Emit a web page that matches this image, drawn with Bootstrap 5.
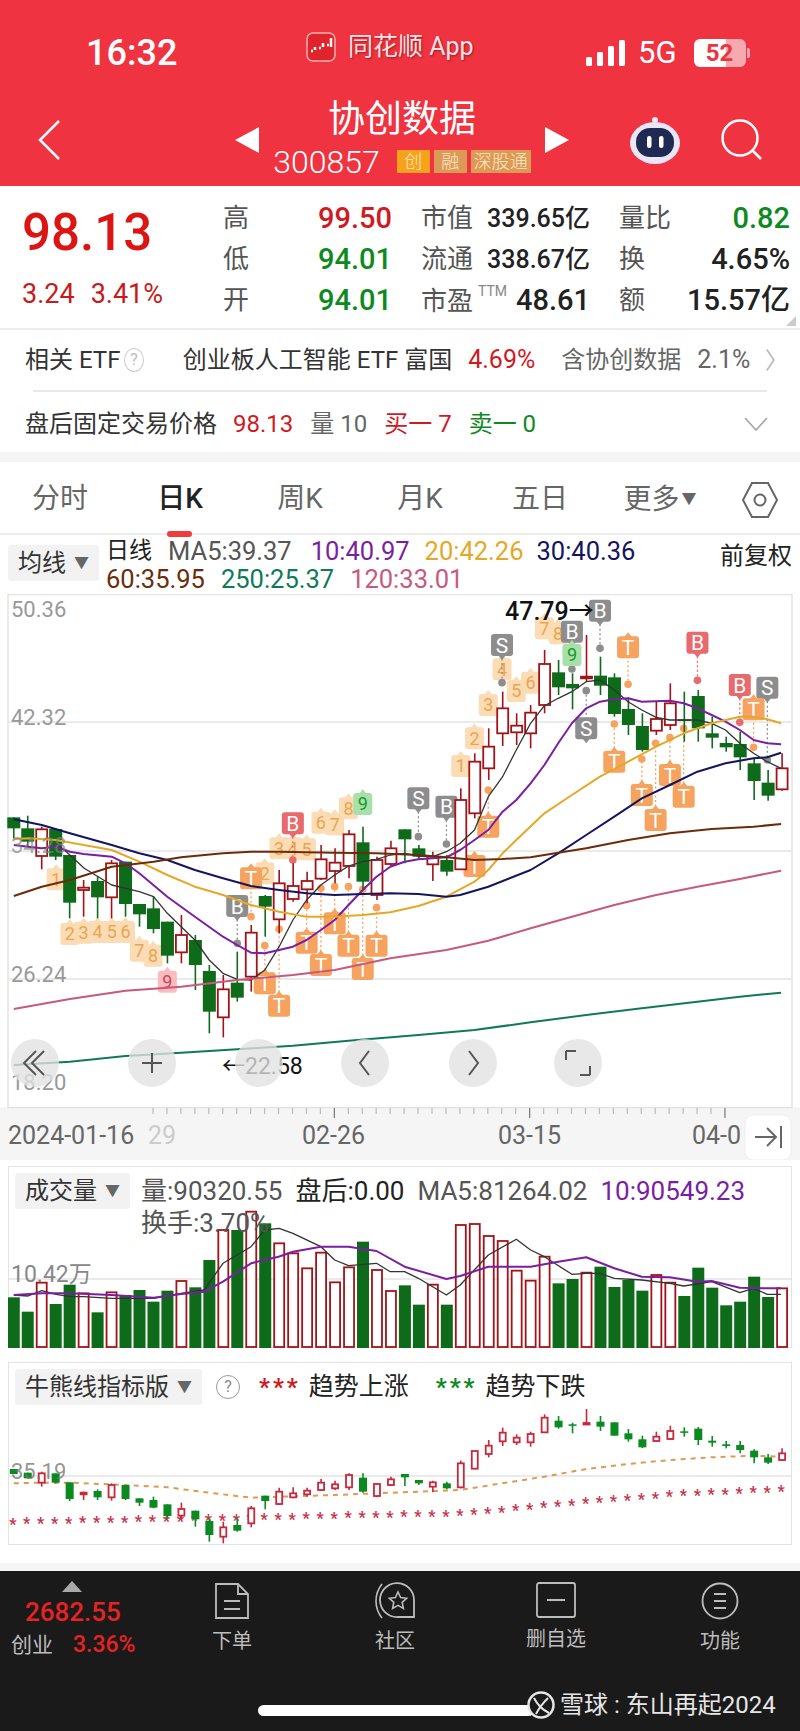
<!DOCTYPE html>
<html lang="zh">
<head>
<meta charset="UTF-8">
<meta name="viewport" content="width=device-width, initial-scale=1.0">
<title>协创数据</title>
<link href="https://cdn.jsdelivr.net/npm/bootstrap@5.3.0/dist/css/bootstrap.min.css" rel="stylesheet">
<style>
    body { width: 800px; background: #fff; font-family: Roboto, "Noto Sans CJK SC", sans-serif; color: #222; overflow-x: hidden; }
    svg { display: block; }
    svg text { font-family: Roboto, "Noto Sans CJK SC", sans-serif; }

    .top-red { height: 186px; background: #ef3340; color: #fff; }
    .status-row { height: 100px; padding-left: 86px; padding-top: 6px; }
    .clock { width: 220px; font-size: 36px; font-weight: 500; }
    .app-name { width: 280px; font-size: 25px; color: #fbe3e5; text-shadow: 1px 1px 2px rgba(90, 0, 0, .5); margin-top: -12px; }
    .app-icon { margin-right: 12px; }
    .net-name { font-size: 31px; margin: 0 14px 0 12px; }
    .batt { position: relative; width: 52px; height: 28px; border-radius: 6px; background: linear-gradient(90deg, #fff 62%, #f6a9ae 62%); color: #ef3340; font-size: 24px; font-weight: 700; line-height: 28px; margin-left: 3px; }
    .batt::after { content: ""; position: absolute; right: -4px; top: 9px; width: 3px; height: 10px; border-radius: 0 2px 2px 0; background: #f6a9ae; }
    .nav-row { height: 80px; }
    .back-slot { width: 235px; padding-left: 37px; }
    .mid-slot { width: 286px; }
    .robot-icon { margin-left: 60px; }
    .search-icon { margin-left: 40px; }
    .stock-title { font-size: 37px; line-height: 38px; }
    .stock-code { font-size: 32px; font-weight: 300; line-height: 36px; margin-top: 5px; }
    .mini-tag { height: 23px; line-height: 23px; font-size: 18px; padding: 0 3px; min-width: 33px; background: #dd9a56; color: #fde9c8; margin-left: 4px; }
    .mini-tag.hot { background: #f7a21c; margin-left: 17px; }

    .quote-panel { height: 144px; border-bottom: 2px solid #ececec; }
    .quote-panel::after { content: ""; position: absolute; right: 4px; bottom: 2px; border: 5px solid transparent; border-right-color: #ccc; border-bottom-color: #ccc; }
    .price-col { width: 223px; padding-left: 22px; }
    .price-big { font-size: 51px; font-weight: 500; color: #dc1414; line-height: 62px; margin-top: 16px; }
    .price-sub { font-size: 27px; color: #c81a1a; margin-top: 14px; line-height: 32px; }
    .quote-grid { display: grid; grid-template-columns: 169px 169px 171px; column-gap: 29px; grid-auto-rows: 41px; padding-top: 12px; }
    .q-key { font-size: 26px; color: #555; white-space: nowrap; }
    .q-val { font-size: 29px; font-weight: 500; white-space: nowrap; }
    .q-val.narrow { font-size: 25px; }
    .q-small { font-size: 14px; color: #888; vertical-align: 14px; margin-left: 5px; }
    .c-up { color: #d11a1f; }
    .c-down { color: #0d8a1e; }
    .c-ink { color: #222; }

    .info-rows { height: 122px; font-size: 24px; white-space: nowrap; color: #333; }
    .info-row { height: 60px; padding: 0 25px; }
    .info-row.lower { padding-top: 4px; }
    .info-rule { height: 2px; background: #e9e9e9; margin: 0 33px; }
    .info-grey { color: #666; }
    .etf-name { margin-left: 39px; }
    .etf-pct { font-size: 25px; }
    .etf-holds { margin-left: 26px; }
    .after-gap { margin-left: 17px; }
    .after-chevron { margin-right: 7px; }
    .help-dot { width: 22px; height: 24px; border: 1.5px solid #ccc; border-radius: 50%; color: #bbb; font-size: 16px; line-height: 21px; text-align: center; }
    .gray-band { height: 10px; background: #f5f5f5; }

    .tab-strip { display: grid; grid-template-columns: repeat(6, 120px) 80px; height: 73px; border-bottom: 2px solid #ececec; }
    .tab-strip .nav-link { padding: 0; font-size: 28px; color: #666; text-align: center; line-height: 74px; position: relative; }
    .tab-strip .nav-link.active { color: #222; font-weight: 500; }
    .tab-strip .nav-link.active::after { content: ""; position: absolute; left: 47px; bottom: 0; width: 25px; height: 6px; border-radius: 3px; background: #ee3b3b; }
    .caret-mark { font-size: 15px; color: #666; vertical-align: 5px; margin-left: 2px; }

    .ma-legend { height: 59px; padding: 2px 8px 0; font-size: 25.5px; line-height: 28px; white-space: nowrap; }
    .pick-box { background: #f2f2f2; border-radius: 3px; height: 36px; font-size: 24px; line-height: 36px; color: #333; padding: 0 10px; }
    .pick-box .caret-mark { color: #666; margin-left: 8px; vertical-align: 3px; }
    .ma-rows { margin-left: 7px; }
    .day-name { font-size: 23px; color: #222; margin-right: 16px; }
    .ma-row-one .m10 { margin: 0 15px 0 19px; }
    .ma-row-one .m20 { margin-right: 13px; }
    .fq-name { font-size: 24px; color: #222; margin-top: 5px; }
    .m5 { color: #555; } .m10 { color: #7a1fa2; } .m20 { color: #e5a826; } .m30 { color: #15155f; }
    .m60 { color: #6b2c0a; } .m250 { color: #0f7a5a; } .m120 { color: #c9597c; }

    .sub-chart { margin: 6px 8px 0; height: 182px; }
    .sub-chart.last-one { margin-top: 14px; height: 183px; }
    .sub-legend { position: absolute; left: 7px; top: 7px; font-size: 24px; line-height: 34px; white-space: nowrap; color: #555; }
    .sub-texts { margin-left: 11px; font-size: 26px; line-height: 32px; padding-top: 2px; }
    .vol-line { gap: 13px; }
    .plain-ink { color: #222; }
    .bull-help { margin-left: 14px; width: 24px; border-color: #999; color: #888; }
    .trend-stars { font-weight: 700; letter-spacing: 3px; }
    .trend-stars.first { margin-left: 19px; }
    .trend-stars.second { margin-left: 27px; }
    .trend-name { font-size: 25px; color: #222; margin-left: 8px; }
    .foot-gap { height: 26px; background: linear-gradient(#fff 18px, #f5f5f5 18px); }

    .dock { height: 160px; background: #1a1a1a; color: #bdbdbd; padding-top: 10px; }
    .dock-index { width: 150px; padding-left: 11px; }
    .dock-up { width: 0; height: 0; border: 10px solid transparent; border-top: 0; border-bottom: 11px solid #aaa; margin: 0 0 0 51px; }
    .dock-num { font-size: 26px; font-weight: 500; color: #e62323; line-height: 32px; margin: 4px 0 0 14px; }
    .dock-sub { font-size: 21px; line-height: 30px; margin-top: 2px; }
    .dock-sub b { font-size: 23px; font-weight: 500; color: #e62323; margin-left: 20px; }
    .dock-item { position: absolute; top: 11px; width: 80px; text-align: center; font-size: 20px; line-height: 26px; }
    .dock-item svg { margin: 0 auto 8px; }
    .dock-a { left: 192px; } .dock-b { left: 355px; } .dock-c { left: 516px; } .dock-d { left: 680px; }
    .home-pill { position: absolute; left: 258px; top: 134px; width: 276px; height: 11px; border-radius: 6px; background: #fff; }
    .water-mark { position: absolute; left: 527px; top: 116px; color: #e6e6e6; font-size: 24px; white-space: nowrap; }
    .water-logo { margin-right: 5px; }
</style>
</head>
<body>
<header class="top-red">
    <div class="status-row d-flex align-items-center">
        <div class="clock">16:32</div>
        <div class="app-name d-flex align-items-center">
            <svg class="app-icon" width="30" height="30" viewBox="0 0 30 30"><rect x="1" y="1" width="28" height="28" rx="6" fill="#e0242c" stroke="#f4b0b0" stroke-width="1.5"/><path d="M5 19h2M9 18v-3M13 16h2M17 15v-4M21 13h2M25 6v9" stroke="#fff" stroke-width="2.5"/></svg>
            <span>同花顺 App</span>
        </div>
        <svg width="40" height="26" viewBox="0 0 40 26"><rect x="0" y="17" width="6" height="9" rx="1.5" fill="#fff"/><rect x="11" y="12" width="6" height="14" rx="1.5" fill="#fff"/><rect x="22" y="6" width="6" height="20" rx="1.5" fill="#fff"/><rect x="33" y="0" width="6" height="26" rx="1.5" fill="#fff"/></svg>
        <div class="net-name">5G</div>
        <div class="batt text-center">52</div>
    </div>
    <div class="nav-row d-flex align-items-center">
        <div class="back-slot"><svg width="24" height="42" viewBox="0 0 24 42"><path d="M22 2 3 21l19 19" fill="none" stroke="#fff" stroke-width="2.5"/></svg></div>
        <svg width="24" height="26" viewBox="0 0 24 26"><path d="M24 0v26L0 13z" fill="#fff"/></svg>
        <div class="mid-slot text-center">
            <div class="stock-title">协创数据</div>
            <div class="stock-code d-flex justify-content-center align-items-center">300857<span class="mini-tag hot">创</span><span class="mini-tag">融</span><span class="mini-tag">深股通</span></div>
        </div>
        <svg width="24" height="26" viewBox="0 0 24 26"><path d="M0 0v26l24-13z" fill="#fff"/></svg>
        <svg class="robot-icon" width="52" height="50" viewBox="0 0 52 50"><circle cx="26" cy="5" r="3" fill="#f3e6f3"/><ellipse cx="26" cy="28" rx="25" ry="21" fill="#e9e6f7"/><rect x="7" y="13" width="38" height="29" rx="14" fill="#1f2a52"/><rect x="18" y="21" width="4.5" height="12" rx="2.2" fill="#fff"/><rect x="30" y="21" width="4.5" height="12" rx="2.2" fill="#fff"/></svg>
        <svg class="search-icon" width="42" height="42" viewBox="0 0 42 42"><circle cx="19" cy="19" r="17.5" fill="none" stroke="#fff" stroke-width="2.5"/><path d="m32 32 8 8" stroke="#fff" stroke-width="2.5"/></svg>
    </div>
</header>

<section class="quote-panel d-flex position-relative">
    <div class="price-col">
        <div class="price-big">98.13</div>
        <div class="price-sub d-flex gap-3"><span>3.24</span><span>3.41%</span></div>
    </div>
    <div class="quote-grid">
        <div class="d-flex justify-content-between align-items-center"><span class="q-key">高</span><span class="q-val c-up">99.50</span></div>
        <div class="d-flex justify-content-between align-items-center"><span class="q-key">市值</span><span class="q-val narrow c-ink">339.65亿</span></div>
        <div class="d-flex justify-content-between align-items-center"><span class="q-key">量比</span><span class="q-val c-down">0.82</span></div>
        <div class="d-flex justify-content-between align-items-center"><span class="q-key">低</span><span class="q-val c-down">94.01</span></div>
        <div class="d-flex justify-content-between align-items-center"><span class="q-key">流通</span><span class="q-val narrow c-ink">338.67亿</span></div>
        <div class="d-flex justify-content-between align-items-center"><span class="q-key">换</span><span class="q-val c-ink">4.65%</span></div>
        <div class="d-flex justify-content-between align-items-center"><span class="q-key">开</span><span class="q-val c-down">94.01</span></div>
        <div class="d-flex justify-content-between align-items-center"><span class="q-key">市盈<span class="q-small">TTM</span></span><span class="q-val c-ink">48.61</span></div>
        <div class="d-flex justify-content-between align-items-center"><span class="q-key">额</span><span class="q-val c-ink">15.57亿</span></div>
    </div>
</section>

<section class="info-rows">
    <div class="info-row d-flex align-items-center">
        <span>相关 ETF</span><span class="help-dot ms-1">?</span>
        <span class="etf-name">创业板人工智能 ETF 富国</span>
        <span class="c-up etf-pct ms-3">4.69%</span>
        <span class="info-grey etf-holds">含协创数据</span>
        <span class="info-grey etf-pct ms-3">2.1%</span>
        <svg width="10" height="26" viewBox="0 0 10 26" class="ms-3"><path d="m1 1 8 12-8 12" fill="none" stroke="#bbb" stroke-width="2"/></svg>
    </div>
    <div class="info-rule"></div>
    <div class="info-row lower d-flex align-items-center">
        <span>盘后固定交易价格</span>
        <span class="c-up ms-3">98.13</span>
        <span class="info-grey after-gap">量 10</span>
        <span class="c-up after-gap">买一 7</span>
        <span class="c-down after-gap">卖一 0</span>
        <svg width="24" height="14" viewBox="0 0 24 14" class="ms-auto after-chevron"><path d="m1 1 11 12L23 1" fill="none" stroke="#aaa" stroke-width="1.8"/></svg>
    </div>
</section>
<div class="gray-band"></div>

<nav class="nav tab-strip">
    <a class="nav-link" href="#">分时</a>
    <a class="nav-link active" href="#">日K</a>
    <a class="nav-link" href="#">周K</a>
    <a class="nav-link" href="#">月K</a>
    <a class="nav-link" href="#">五日</a>
    <a class="nav-link" href="#">更多<span class="caret-mark">▼</span></a>
    <a class="nav-link d-flex align-items-center justify-content-center" href="#"><svg width="36" height="38" viewBox="0 0 36 38"><path d="M10 2h16l9 17-9 17H10L1 19z" fill="none" stroke="#666" stroke-width="2"/><circle cx="18" cy="19" r="5.5" fill="none" stroke="#666" stroke-width="2"/></svg></a>
</nav>

<section class="ma-legend d-flex align-items-start">
    <div class="pick-box mt-2">均线<span class="caret-mark">▼</span></div>
    <div class="ma-rows">
        <div class="d-flex ma-row-one"><span class="day-name">日线</span><span class="m5">MA5:39.37</span><span class="m10">10:40.97</span><span class="m20">20:42.26</span><span class="m30">30:40.36</span></div>
        <div class="d-flex gap-3"><span class="m60">60:35.95</span><span class="m250">250:25.37</span><span class="m120">120:33.01</span></div>
    </div>
    <div class="fq-name ms-auto">前复权</div>
</section>

<div id="mainChart"></div>

<section class="sub-chart position-relative" id="volChart">
    <div class="sub-legend d-flex align-items-start">
        <div class="pick-box">成交量<span class="caret-mark">▼</span></div>
        <div class="sub-texts">
            <div class="d-flex vol-line"><span>量:90320.55</span><span class="plain-ink">盘后:0.00</span><span>MA5:81264.02</span><span class="m10">10:90549.23</span></div>
            <div>换手:3.70%</div>
        </div>
    </div>
</section>

<section class="sub-chart last-one position-relative" id="bullChart">
    <div class="sub-legend d-flex align-items-center">
        <div class="pick-box">牛熊线指标版<span class="caret-mark">▼</span></div>
        <span class="help-dot bull-help">?</span>
        <span class="c-up trend-stars first">***</span>
        <span class="trend-name">趋势上涨</span>
        <span class="c-down trend-stars second">***</span>
        <span class="trend-name">趋势下跌</span>
    </div>
</section>
<div class="foot-gap"></div>

<footer class="dock position-relative d-flex">
    <div class="dock-index">
        <div class="dock-up"></div>
        <div class="dock-num">2682.55</div>
        <div class="dock-sub">创业<b>3.36%</b></div>
    </div>
    <div class="dock-item dock-a"><svg width="36" height="38" viewBox="0 0 36 38"><path d="M2 2h22l10 10v24H2zM24 2v10h10M10 19h16M10 27h16" fill="none" stroke="#bdbdbd" stroke-width="1.8"/></svg>下单</div>
    <div class="dock-item dock-b"><svg width="42" height="38" viewBox="0 0 42 38"><path d="M8 2C0 12 0 26 8 36" fill="none" stroke="#bdbdbd" stroke-width="1.6"/><path d="M40 35H24a17 17 0 1 1 16-17z" fill="none" stroke="#bdbdbd" stroke-width="1.8"/><path d="m24 10 2.6 5.6 6 .7-4.400 4.100 1.200 6-5.400-3-5.400 3 1.200-6-4.400-4.100 6-.7z" fill="none" stroke="#bdbdbd" stroke-width="1.6"/></svg>社区</div>
    <div class="dock-item dock-c"><svg width="40" height="36" viewBox="0 0 40 36"><rect x="1" y="1" width="38" height="34" rx="2" fill="none" stroke="#bdbdbd" stroke-width="1.8"/><path d="M11 18h18" stroke="#bdbdbd" stroke-width="2"/></svg>删自选</div>
    <div class="dock-item dock-d"><svg width="38" height="38" viewBox="0 0 38 38"><circle cx="19" cy="19" r="17.500" fill="none" stroke="#bdbdbd" stroke-width="1.8"/><path d="M13 12h12M13 19h12M13 26h12" stroke="#bdbdbd" stroke-width="2"/></svg>功能</div>
    <div class="home-pill"></div>
    <div class="water-mark d-flex align-items-center">
        <svg class="water-logo" width="28" height="30" viewBox="0 0 28 30"><circle cx="14" cy="15" r="12.500" fill="#1a1a1a" stroke="#e6e6e6" stroke-width="2.500"/><path d="M7 8c4 8 9 12 15 15M21 8C17 12 12 18 9 24" fill="none" stroke="#e6e6e6" stroke-width="2"/></svg>
        <span>雪球 : 东山再起2024</span>
    </div>
</footer>

<script>
    // zoom crops were 1.96x wide and 3x tall, so data stays in those units
    const X = z => z / 1.96;
    const Y3 = z => 780 + z / 3;
    const Y4 = z => 1150 + z / 3;
    const Y5 = z => 1350 + z / 3;
    const slotX = i => X(27 + 27.38 * i);

    const UP = "#a11318", DOWN = "#0d6b1a";

    // [up?, high, top, bottom, low]
    const mainBars = [
        [0,112,112,145,175],[0,107,145,185,200],[1,140,148,228,268],[0,145,147,230,240],[0,225,225,368,415],
        [1,300,323,330,410],[0,290,303,352,415],[1,240,250,352,415],[0,245,245,372,410],[0,372,372,403,440],
        [0,350,385,447,460],[0,425,425,527,550],[1,405,465,517,550],[0,465,480,555,630],[0,555,573,695,760],
        [1,585,628,712,772],[0,515,608,653,665],[1,435,458,590,635],[0,345,348,380,470],[1,270,310,418,460],
        [1,250,318,357,365],[1,275,303,328,370],[1,195,238,296,300],[1,205,248,273,310],[1,150,163,258,295],
        [0,140,187,305,330],[1,230,240,345,360],[1,182,205,252,258],[0,148,148,178,250],[0,195,205,230,240],
        [1,215,230,253,303],[0,225,240,275,287],[1,25,60,268,270],[1,-80,-55,100,115],[1,-155,-100,-35,0],
        [1,-265,-215,-140,-102],[1,-200,-163,-143,-105],[1,-225,-202,-140,-95],[1,-390,-348,-225,-200],[0,-360,-323,-278,-255],
        [0,-320,-288,-275,-212],[1,-435,-310,-305,-295],[0,-370,-313,-283,-255],[0,-320,-308,-198,-190],[0,-248,-213,-165,-135],
        [0,-200,-162,-90,-85],[1,-235,-183,-148,-135],[1,-290,-230,-165,-150],[0,-265,-182,-177,-115],[0,-270,-252,-155,-115],
        [0,-190,-140,-127,-95],[0,-130,-111,-98,-85],[0,-145,-108,-68,-30],[0,-65,-50,3,60],[0,-30,8,47,62],[1,-80,-35,28,32]
    ];

    const mainLines = [
        ["#333", 1.3, [[110,190],[137,225],[165,265],[219,315],[273,335],[301,350],[328,400],[382,480],[410,540],[437,580],[465,598],[492,600],[519,570],[547,500],[574,420],[601,360],[629,315],[656,285],[683,258],[711,245],[738,238],[765,225],[793,220],[820,228],[848,230],[875,215],[902,190],[930,150],[957,50],[985,-10],[1012,-90],[1040,-170],[1067,-223],[1094,-245],[1121,-265],[1149,-295],[1176,-300],[1204,-270],[1231,-235],[1258,-210],[1286,-188],[1313,-180],[1367,-180],[1395,-170],[1422,-150],[1450,-110],[1477,-80],[1504,-55],[1531,-35]]],
        ["#7a1fa2", 2, [[27,195],[55,200],[82,205],[110,200],[137,215],[164,222],[219,230],[246,250],[273,280],[328,350],[382,410],[437,470],[465,495],[492,518],[519,520],[547,510],[574,500],[601,480],[629,450],[656,420],[683,375],[711,330],[738,290],[765,260],[793,245],[820,238],[848,235],[875,232],[902,210],[930,180],[957,150],[985,95],[1012,60],[1040,10],[1067,-45],[1094,-110],[1121,-170],[1149,-215],[1176,-235],[1204,-242],[1231,-245],[1258,-235],[1313,-238],[1340,-230],[1367,-215],[1395,-195],[1422,-175],[1450,-150],[1477,-120],[1504,-110],[1531,-107]]],
        ["#e5a826", 2, [[27,178],[55,175],[110,180],[164,195],[219,210],[273,245],[328,285],[382,320],[437,345],[492,375],[547,395],[601,410],[656,410],[711,405],[765,397],[820,378],[875,350],[930,305],[957,270],[985,220],[1012,180],[1067,100],[1121,45],[1176,-10],[1231,-55],[1286,-100],[1340,-140],[1395,-170],[1450,-190],[1477,-190],[1504,-182],[1531,-170]]],
        ["#15155f", 2, [[27,118],[82,135],[137,160],[219,195],[273,220],[328,240],[382,270],[437,295],[492,318],[547,330],[601,340],[656,345],[711,342],[765,340],[820,342],[875,350],[902,345],[957,320],[1040,270],[1094,220],[1149,165],[1204,110],[1258,55],[1313,15],[1367,-25],[1422,-50],[1477,-65],[1504,-68],[1531,-82]]],
        ["#6b2c0a", 2, [[27,348],[82,320],[137,300],[219,260],[301,245],[355,232],[437,220],[492,215],[547,215],[656,218],[738,220],[820,225],[875,232],[930,240],[984,237],[1040,232],[1094,218],[1149,205],[1231,180],[1313,160],[1395,147],[1477,140],[1531,132]]],
        ["#c9597c", 2, [[27,687],[137,657],[246,632],[355,620],[465,600],[574,585],[656,570],[765,535],[875,510],[957,482],[1040,445],[1121,410],[1204,375],[1286,345],[1367,320],[1450,297],[1531,272]]],
        ["#0f7a5a", 2, [[27,855],[137,845],[246,828],[355,818],[465,808],[574,797],[683,782],[820,765],[930,750],[1040,727],[1149,705],[1258,685],[1367,665],[1450,650],[1531,638]]]
    ];

    // [x, y, label, kind, dotY]
    const tagData = [
        [110,298,"1","n"],[137,462,"2","n"],[164,458,"3","n"],[191,456,"4","n"],[219,456,"5","n"],[246,456,"6","n"],[273,512,"7","n"],[300,527,"8","n"],[328,605,"9","p"],
        [465,378,"B","g",490],[492,295,"T","t",410],[519,280,"2","n"],[547,205,"3","n"],[574,205,"4","n"],[601,208,"5","n"],[574,130,"B","r",240],
        [629,128,"6","n"],[656,133,"7","n"],[683,85,"8","n"],[711,72,"9","v"],
        [601,488,"T","t",377],[629,555,"T","t",325],[656,430,"T","t",320],[683,497,"T","t",320],[738,497,"T","t",383],[711,567,"T","t",328],
        [519,610,"T","t",497],[547,677,"T","t",447],[820,55,"S","g",170],[875,80,"B","g",192],[930,258,"T","t"],[957,140,"T","t",30],
        [1176,-508,"B","g",-395],[984,-405,"S","g",-292],[1121,-445,"B","g"],[1121,-375,"9","v",-333],[984,-332,"4","n"],[957,-225,"3","n"],[930,-125,"2","n"],[903,-42,"1","n"],
        [1012,-267,"5","n"],[1040,-292,"6","n"],[1067,-455,"7","n"],[1094,-440,"8","n"],[1231,-398,"T","t",-287],[1367,-412,"B","r",-299],[1450,-285,"B","r",-173],
        [1504,-277,"S","g",-60],[1477,-212,"T","t",-98],[1149,-155,"S","g",-268],[1204,-55,"T","t",-168],[1258,45,"T","t",-63],[1313,-15,"T","t",-127],[1340,50,"T","t",-155],[1285,120,"T","t",-110]
    ];

    const tagFill = { t: "#f6a35f", g: "#8d8d8d", r: "#e86a6c", n: "#fbdcb5", v: "#a9e0aa", p: "#fbbcc0" };
    const tagInk = { t: "#fff", g: "#fff", r: "#fff", n: "#eba550", v: "#149a2a", p: "#c9485a" };
    const dotFill = { t: "#f6a35f", g: "#8d8d8d", r: "#e86a6c", v: "#8d8d8d" };

    function makeTag(t) {
        const [zx, zy, label, kind, dotZ] = t;
        const x = X(zx), y = Y3(zy);
        let out = "";
        if (dotZ !== undefined) {
            const d = Y3(dotZ);
            out += `<line x1="${x}" y1="${y}" x2="${x}" y2="${d}" stroke="${dotFill[kind]}" stroke-width="1.300" stroke-dasharray="2 2.500"/>`;
            out += `<circle cx="${x}" cy="${d}" r="3.800" fill="${dotFill[kind]}"/>`;
        }
        const tipDown = kind === "g" || kind === "r";
        const tip = tipDown ? `${x - 4},${y + 10} ${x + 4},${y + 10} ${x},${y + 15}` : `${x - 4},${y - 10} ${x + 4},${y - 10} ${x},${y - 15}`;
        const small = kind === "n" || kind === "v" || kind === "p";
        const w = small ? 19 : 22;
        out += `<polygon points="${tip}" fill="${tagFill[kind]}"/>`;
        out += `<rect x="${x - w / 2}" y="${y - 11}" width="${w}" height="22" rx="3" fill="${tagFill[kind]}"/>`;
        const size = small ? 18 : 21;
        out += `<text x="${x}" y="${y + size * 0.36}" font-size="${size}" text-anchor="middle" fill="${tagInk[kind]}">${label}</text>`;
        return out;
    }

    function candleSvg(bars, yf, width, upColor, downColor) {
        return bars.map((b, i) => {
            const x = slotX(i), [up, hi, top, bot, lo] = b;
            const c = up ? upColor : downColor;
            let s = `<line x1="${x}" y1="${yf(hi)}" x2="${x}" y2="${yf(lo)}" stroke="${c}" stroke-width="1.600"/>`;
            const h = Math.max(yf(bot) - yf(top), 1.5);
            if (up) s += `<rect x="${x - width / 2}" y="${yf(top)}" width="${width}" height="${h}" fill="#fff" stroke="${c}" stroke-width="1.800"/>`;
            else s += `<rect x="${x - width / 2 - 1}" y="${yf(top)}" width="${width + 2}" height="${h}" fill="${c}"/>`;
            return s;
        }).join("");
    }

    function polyline(pts, yf, color, w, extra) {
        const p = pts.map(q => `${X(q[0]).toFixed(1)},${yf(q[1]).toFixed(1)}`).join(" ");
        return `<polyline points="${p}" fill="none" stroke="${color}" stroke-width="${w}" stroke-linejoin="round" ${extra || ""}/>`;
    }

    function gridLine(y) {
        return `<line x1="8" x2="792" y1="${y}" y2="${y}" stroke="#e3e3e3" stroke-width="1.500"/>`;
    }

    function axisLabel(x, y, text, size, color, weight) {
        return `<text x="${x}" y="${y}" font-size="${size}" fill="${color}" font-weight="${weight || 400}">${text}</text>`;
    }

    function drawMain() {
        let s = `<svg width="800" height="566" viewBox="0 594 800 566">`;
        s += `<rect x="0" y="1107" width="800" height="53" fill="#f5f5f5"/>`;
        s += `<rect x="8" y="594.500" width="784" height="513" fill="#fff" stroke="#e3e3e3" stroke-width="1.500"/>`;
        s += gridLine(722) + gridLine(851) + gridLine(979);
        // number tags go under the letter tags
        const isNum = t => t[3] === "n" || t[3] === "p";
        s += tagData.filter(isNum).map(makeTag).join("");
        s += tagData.filter(t => !isNum(t)).map(makeTag).join("");
        s += candleSvg(mainBars, Y3, 11, UP, DOWN);
        mainLines.forEach(l => { s += polyline(l[2], Y3, l[0], l[1]); });
        s += axisLabel(11, 617, "50.36", 22, "#999");
        s += axisLabel(11, 725, "42.32", 22, "#999");
        s += axisLabel(11, 853, "34.28", 22, "rgba(130,130,130,.7)");
        s += axisLabel(11, 982, "26.24", 22, "#999");
        s += axisLabel(11, 1090, "18.20", 22, "#999");
        s += axisLabel(505, 620, "47.79→", 25, "#111", 500);
        s += axisLabel(222, 1074, "←22.58", 23, "#111");

        // ticks under the chart
        for (let i = 0; i <= 41; i++) {
            const x = 153 + i * 13.950;
            const major = i === 13 || i === 27 || i === 41;
            s += `<line x1="${x}" x2="${x}" y1="1108" y2="${major ? 1118 : 1114}" stroke="${major ? "#777" : "#bbb"}" stroke-width="1.200"/>`;
        }
        s += axisLabel(8, 1144, "2024-01-16", 25, "#666");
        s += axisLabel(148, 1144, "29", 25, "#ccc");
        s += axisLabel(302, 1144, "02-26", 25, "#666");
        s += axisLabel(498, 1144, "03-15", 25, "#666");
        s += axisLabel(692, 1144, "04-0", 25, "#666");
        s += `<rect x="745" y="1115" width="46" height="45" rx="8" fill="#fff" stroke="#eee"/>`;
        s += `<path d="M755 1137h21M767 1128l9 9-9 9M781 1126v22" fill="none" stroke="#666" stroke-width="2"/>`;

        // round chart buttons sit over the lines
        const btnIcons = [
            "M44 1051l-12 12 12 12M36 1051l-12 12 12 12",
            "M142 1063h20M152 1053v20",
            "",
            "M369 1051l-9 12 9 12",
            "M469 1051l9 12-9 12",
            "M566 1051h10v0M566 1051v9M590 1075h-10M590 1075v-9"
        ];
        [35, 152, 259, 365, 473, 578].forEach((cx, i) => {
            s += `<circle cx="${cx}" cy="1063" r="24" fill="rgba(226,226,226,.78)"/>`;
            if (btnIcons[i]) s += `<path d="${btnIcons[i]}" fill="none" stroke="#555" stroke-width="2"/>`;
        });
        s += `</svg>`;
        document.getElementById("mainChart").innerHTML = s;
    }

    // [up?, bar top]
    const volBars = [[0,442],[0,485],[1,398],[0,462],[0,404],[1,430],[0,487],[1,427],[0,435],[0,420],[0,455],[0,422],[1,393],[0,412],[0,330],[1,240],[0,240],[1,185],[0,220],[1,280],[1,310],[1,355],[1,308],[1,397],[1,352],[0,275],[1,360],[1,423],[0,406],[0,464],[1,404],[0,464],[1,225],[1,222],[1,258],[1,273],[1,362],[1,392],[1,320],[0,400],[0,387],[1,368],[0,350],[0,411],[0,390],[0,422],[1,375],[1,398],[0,438],[0,353],[0,413],[0,466],[0,455],[0,380],[0,441],[1,415]];
    const volBlack = [[27,435],[55,438],[82,422],[110,433],[137,440],[164,440],[219,445],[273,445],[301,445],[355,430],[400,420],[437,340],[492,290],[519,240],[547,235],[574,250],[629,290],[656,330],[683,347],[738,340],[765,365],[793,365],[820,385],[848,410],[875,435],[902,405],[957,315],[1012,268],[1040,300],[1067,320],[1121,373],[1149,370],[1176,370],[1204,385],[1258,390],[1313,400],[1340,408],[1395,395],[1450,428],[1477,415],[1504,433],[1531,433]];
    const volPurple = [[27,435],[82,430],[137,430],[219,435],[301,443],[355,432],[400,425],[437,395],[492,340],[546,320],[574,305],[629,290],[683,290],[738,303],[793,350],[875,387],[902,378],[957,350],[1040,350],[1094,335],[1149,322],[1204,355],[1258,380],[1313,382],[1367,395],[1395,393],[1450,413],[1504,415],[1531,415]];

    function drawVol() {
        let s = `<svg class="position-absolute top-0 start-0" width="784" height="182" viewBox="8 1166 784 182">`;
        s += `<rect x="8" y="1166" width="784" height="182" fill="#fff" stroke="#e3e3e3" stroke-width="2"/>`;
        s += gridLine(1279);
        volBars.forEach((b, i) => {
            const x = slotX(i), y = Y4(b[1]);
            if (b[0]) s += `<rect x="${x - 5}" y="${y}" width="10" height="${1348 - y - 1}" fill="#fff" stroke="${UP}" stroke-width="1.800"/>`;
            else s += `<rect x="${x - 6}" y="${y}" width="12" height="${1348 - y}" fill="${DOWN}"/>`;
        });
        s += polyline(volBlack, Y4, "#333", 1.300);
        s += polyline(volPurple, Y4, "#7a1fa2", 2);
        s += axisLabel(11, 1282, "10.42万", 23, "#888");
        s += `</svg>`;
        document.getElementById("volChart").insertAdjacentHTML("afterbegin", s);
    }

    const bullBars = [
        [0,357,357,372,372],[0,368,368,385,385],[1,365,370,398,410],[0,370,370,398,400],[0,397,397,447,453],[1,425,428,433,450],[0,418,423,442,450],[1,400,405,442,452],[0,405,405,447,450],[0,445,445,458,468],
        [0,440,450,473,475],[0,463,463,498,505],[1,458,477,497,510],[0,482,482,508,530],[0,505,513,555,575],[1,515,532,560,580],[0,505,525,542,545],[1,468,475,520,532],[0,437,437,453,478],[1,413,425,462,465],
        [1,412,430,442,445],[1,413,422,433,440],[1,387,398,420,422],[1,392,403,415,420],[1,370,375,412,420],[0,370,383,425,428],[1,400,402,438,442],[1,380,388,405,408],[0,372,372,382,408],[0,390,390,400,405],
        [1,392,397,410,427],[0,395,400,415,418],[1,332,340,412,415],[1,303,303,356,358],[1,270,287,312,322],[1,233,248,274,288],[1,253,263,277,285],[1,245,252,277,290],[1,193,203,247,248],[0,198,212,232,236],
        [0,218,223,227,250],[1,177,219,221,224],[0,198,215,230,243],[0,217,217,257,257],[0,237,250,268,275],[0,257,268,292,294],[1,245,260,273,275],[1,227,243,267,270],[0,232,244,248,260],[0,231,236,270,285],
        [0,258,272,278,290],[0,273,283,288,295],[0,273,285,300,310],[0,298,302,322,340],[0,312,322,338,342],[1,295,310,330,333]
    ];
    const bullDash = [[27,400],[82,398],[137,398],[246,405],[328,412],[410,428],[492,443],[547,440],[656,435],[738,430],[820,425],[902,420],[984,400],[1067,380],[1149,357],[1231,342],[1313,330],[1395,322],[1477,317],[1531,320]];
    const starPts = [[0,515],[12,506],[32,490],[36,475],[39,462],[42,450],[45,440],[48,430],[51,425],[55,417]];

    function starY(i) {
        for (let k = 0; k < starPts.length - 1; k++) {
            const a = starPts[k], b = starPts[k + 1];
            if (i <= b[0]) return a[1] + (b[1] - a[1]) * (i - a[0]) / (b[0] - a[0]);
        }
        return 417;
    }

    function drawBull() {
        let s = `<svg class="position-absolute top-0 start-0" width="784" height="183" viewBox="8 1362 784 183">`;
        s += `<rect x="8" y="1362" width="784" height="183" fill="#fff" stroke="#e3e3e3" stroke-width="2"/>`;
        s += gridLine(1476);
        s += polyline(bullDash, Y5, "#e09a50", 2, `stroke-dasharray="5 5"`);
        for (let i = 0; i < 56; i++) {
            s += `<text x="${slotX(i) - 1}" y="${Y5(starY(i)) + 8}" font-size="16" font-weight="700" text-anchor="middle" fill="#c8324a">*</text>`;
        }
        s += candleSvg(bullBars, Y5, 6, "#c8283c", "#0a8a20");
        s += axisLabel(11, 1479, "35.19", 22, "rgba(120,120,120,.8)");
        s += `</svg>`;
        document.getElementById("bullChart").insertAdjacentHTML("afterbegin", s);
    }

    drawMain();
    drawVol();
    drawBull();
</script>
<script src="https://cdn.jsdelivr.net/npm/bootstrap@5.3.0/dist/js/bootstrap.bundle.min.js"></script>
</body>
</html>
